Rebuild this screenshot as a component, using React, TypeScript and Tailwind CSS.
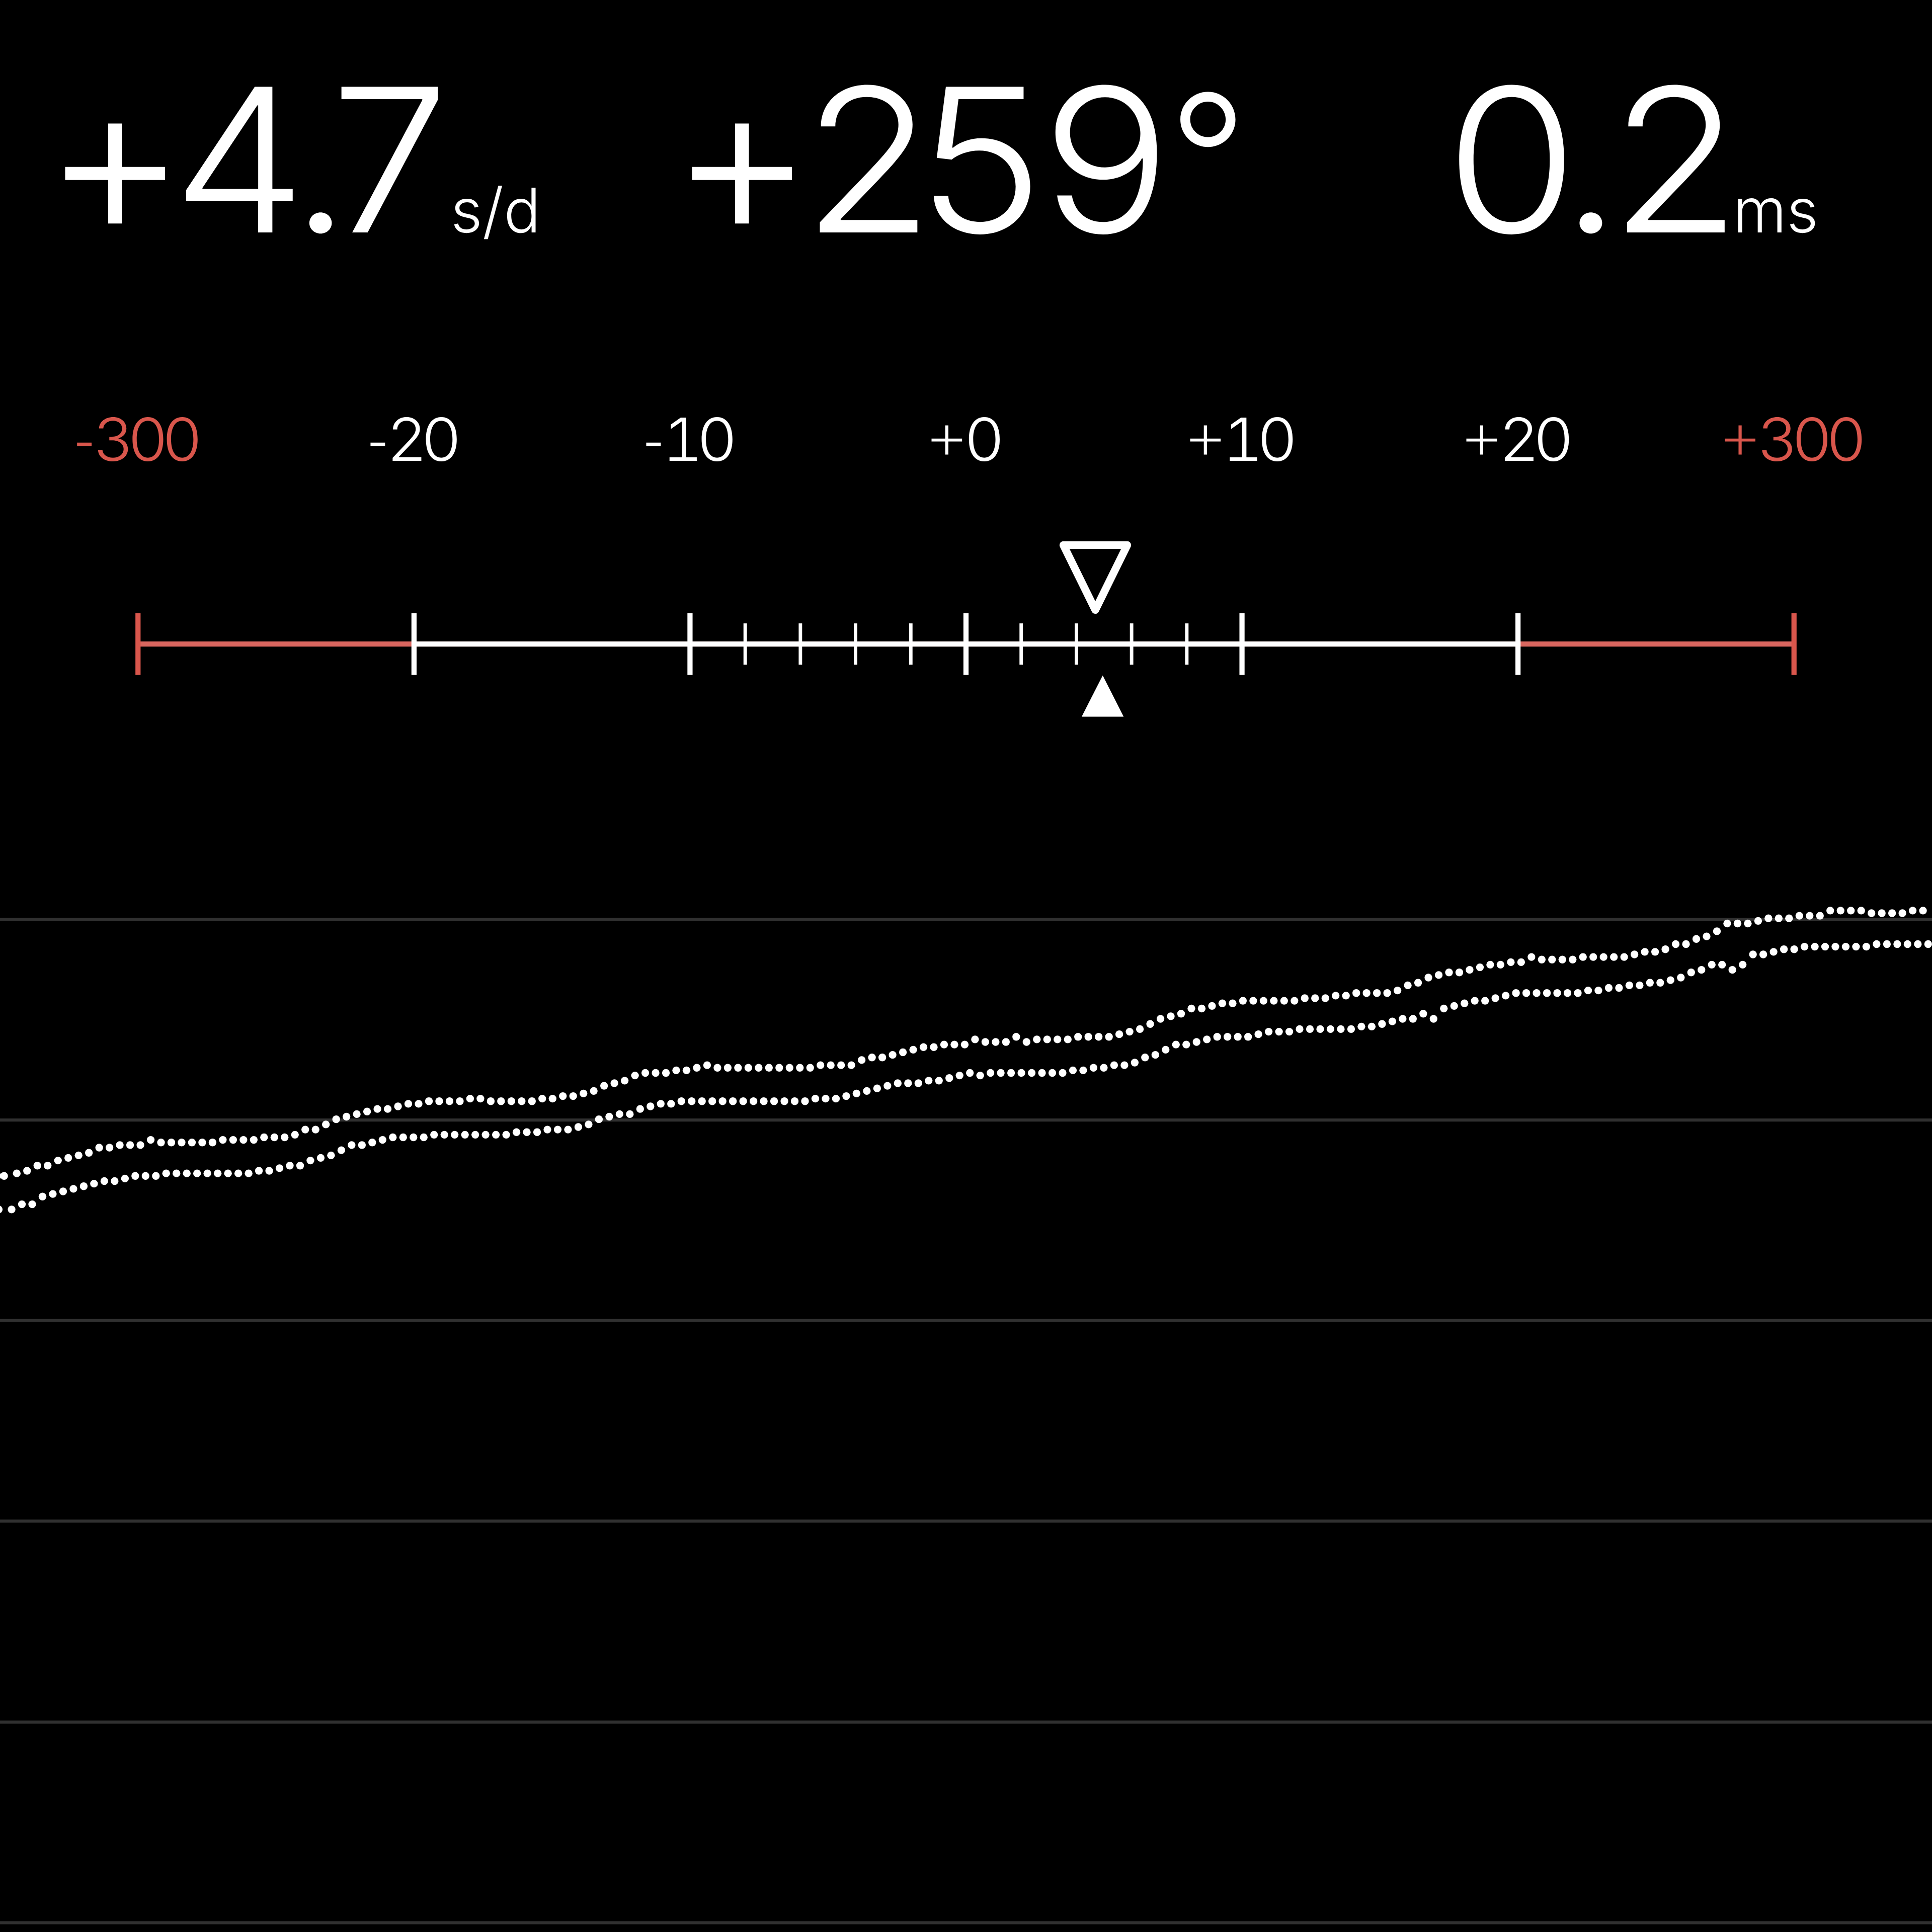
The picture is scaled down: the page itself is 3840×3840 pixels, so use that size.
const SCALE_LABELS = ["-300", "-20", "-10", "+0", "+10", "+20", "+300"];

const GRID_LINES = [356.9, 434.8, 512.6, 590.5, 668.5, 746.4];

// one beat per entry, as a row on the 750 x 750 grid
const TICK_TRACE = [
  455, 454, 452, 452, 450, 449, 448, 447, 445, 445, 444, 444, 444, 442, 443, 443, 443, 443, 443, 443,
  442, 442, 442, 442, 441, 441, 441, 440, 438, 438, 436, 434, 433, 432, 431, 430, 430, 429, 428, 428,
  427, 427, 427, 427, 426, 426, 427, 427, 427, 427, 427, 426, 426, 425, 425, 424, 423, 421, 420, 419,
  417, 416, 416, 416, 415, 415, 414, 413, 414, 414, 414, 414, 414, 414, 414, 414, 414, 414, 413, 413,
  413, 413, 411, 410, 410, 409, 408, 407, 406, 406, 405, 405, 405, 403, 404, 404, 404, 402, 404, 403,
  403, 403, 403, 402, 402, 402, 402, 401, 400, 399, 397, 395, 394, 393, 391, 391, 390, 389, 389, 388,
  388, 388, 388, 388, 388, 387, 387, 387, 386, 386, 385, 385, 385, 385, 384, 382, 381, 379, 378, 377,
  377, 376, 375, 374, 374, 373, 373, 371, 372, 372, 372, 372, 371, 371, 371, 371, 371, 370, 369, 369,
  368, 366, 366, 364, 363, 361, 358, 358, 358, 357, 356, 356, 356, 355, 355, 355, 353, 353, 353, 353,
  354, 354, 354, 354, 353, 353,
];

const TOCK_TRACE = [
  469, 467, 467, 464, 463, 462, 461, 460, 459, 458, 458, 457, 456, 456, 456, 455, 455, 455, 455, 455,
  455, 455, 455, 455, 454, 454, 453, 452, 452, 450, 449, 448, 446, 444, 444, 443, 442, 441, 441, 441,
  441, 440, 440, 440, 440, 440, 440, 440, 440, 439, 439, 439, 438, 438, 438, 437, 436, 434, 433, 432,
  432, 430, 429, 428, 428, 427, 427, 427, 427, 427, 427, 427, 427, 427, 427, 427, 427, 427, 426, 426,
  426, 425, 424, 423, 422, 421, 420, 420, 420, 419, 419, 418, 417, 416, 417, 416, 416, 416, 416, 416,
  416, 416, 416, 415, 415, 414, 414, 413, 413, 412, 410, 409, 407, 405, 405, 404, 403, 402, 402, 402,
  402, 401, 400, 400, 400, 399, 399, 399, 399, 399, 399, 398, 398, 397, 396, 395, 395, 393, 395, 391,
  390, 389, 388, 388, 387, 386, 385, 385, 385, 385, 385, 385, 385, 384, 384, 383, 383, 382, 382, 381,
  381, 380, 379, 377, 376, 374, 374, 376, 374, 370, 370, 369, 368, 368, 367, 367, 367, 367, 367, 367,
  367, 366, 366, 366, 366, 366, 366,
];

type TraceProps = {
  rows: number[];
  start: number;
};

const Trace = ({ rows, start }: TraceProps) => (
  <g fill="#fff">
    {rows.map((row, i) => (
      <circle key={i} cx={start + i * 4} cy={row + 0.5} r={1.5} />
    ))}
  </g>
);

const Readings = () => (
  <div className="grid h-[640px] grid-cols-3 pt-[75px] text-[398px] leading-[484px] font-light whitespace-nowrap text-white">
    <div className="flex items-baseline pl-[85px]">
      <span className="relative top-[8px] mr-[-29px] text-[440px] leading-[453px]">+</span>
      <span className="origin-left scale-x-[1.06]">
        <span className="tracking-[-29px]">4</span>
        <span className="tracking-[-38px]">.</span>
        <span>7</span>
      </span>
      <span className="ml-[34px] text-[122px]">s/d</span>
    </div>
    <div className="flex items-baseline pl-[51px]">
      <span className="relative top-[8px] mr-[-23px] text-[440px] leading-[453px]">+</span>
      <span className="origin-left scale-x-[1.07]">
        <span className="tracking-[-32px]">2</span>
        <span className="tracking-[-4px]">5</span>
        <span>9</span>
      </span>
      <span className="relative top-[-26px] ml-[43px] text-[345px]">°</span>
    </div>
    <div className="flex items-baseline pl-[313px]">
      <span className="origin-left scale-x-[1.07]">
        <span className="tracking-[-32px]">0</span>
        <span className="tracking-[-21px]">.</span>
        <span>2</span>
      </span>
      <span className="ml-[22px] text-[122px]">ms</span>
    </div>
  </div>
);

const Labels = () => (
  <div className="grid h-[360px] grid-cols-7 pt-[171px] text-center text-[118px] leading-[124px] font-light text-white tabular-nums">
    {SCALE_LABELS.map((label) => (
      <div
        key={label}
        className={`scale-x-[1.06] pr-[12px] ${label.endsWith("300") ? "text-[#d9564c]" : ""}`}
      >
        <span className="font-['Liberation_Sans',sans-serif] text-[124px] tracking-[-4px] [-webkit-text-stroke:3px_#000]">
          {label[0]}
        </span>
        <span className="tracking-[-12px]">{label.slice(1)}</span>
      </div>
    ))}
  </div>
);

// seven equal columns, a major tick in the middle of each
const major = (i: number) => (750 / 14) * (2 * i + 1);

const Gauge = () => (
  <svg className="block h-[512px] w-full shrink-0" viewBox="0 195.3125 750 100">
    <rect x={major(0)} y={249} width={major(6) - major(0)} height={2} fill="#d9665f" />
    <rect x={major(1)} y={249} width={major(5) - major(1)} height={2} fill="#fff" />
    {[1, 2, 3, 4, 6, 7, 8, 9].map((n) => (
      <rect key={n} x={major(2) + (n * 750) / 35 - 0.67} y={242} width={1.34} height={16} fill="#fff" />
    ))}
    {SCALE_LABELS.map((label, i) => (
      <rect
        key={label}
        x={major(i) - 1}
        y={238}
        width={2}
        height={24}
        fill={label.endsWith("300") ? "#d9564c" : "#fff"}
      />
    ))}
    <path
      d="M412.8 211.6H437.6L425.2 236.8Z"
      fill="none"
      stroke="#fff"
      strokeWidth={3}
      strokeLinejoin="round"
    />
    <path d="M428.07 262.2L436.2 278.2H419.9Z" fill="#fff" />
  </svg>
);

const Chart = () => (
  <svg className="block h-[2328px] w-full shrink-0" viewBox="0 295.3125 750 454.6875">
    {GRID_LINES.map((y) => (
      <rect key={y} x={0} y={y - 0.6} width={750} height={1.2} fill="#303030" />
    ))}
    <Trace rows={TICK_TRACE} start={6.5} />
    <circle cx={1.6} cy={456.5} r={1.5} fill="#fff" />
    <circle cx={-1} cy={456.5} r={1.5} fill="#fff" />
    <Trace rows={TOCK_TRACE} start={4.5} />
    <circle cx={-0.5} cy={469.5} r={1.5} fill="#fff" />
  </svg>
);

export default function App() {
  return (
    <div className="flex h-[3840px] w-[3840px] flex-col overflow-hidden bg-black font-['Inter',sans-serif]">
      <Readings />
      <Labels />
      <Gauge />
      <Chart />
    </div>
  );
}
